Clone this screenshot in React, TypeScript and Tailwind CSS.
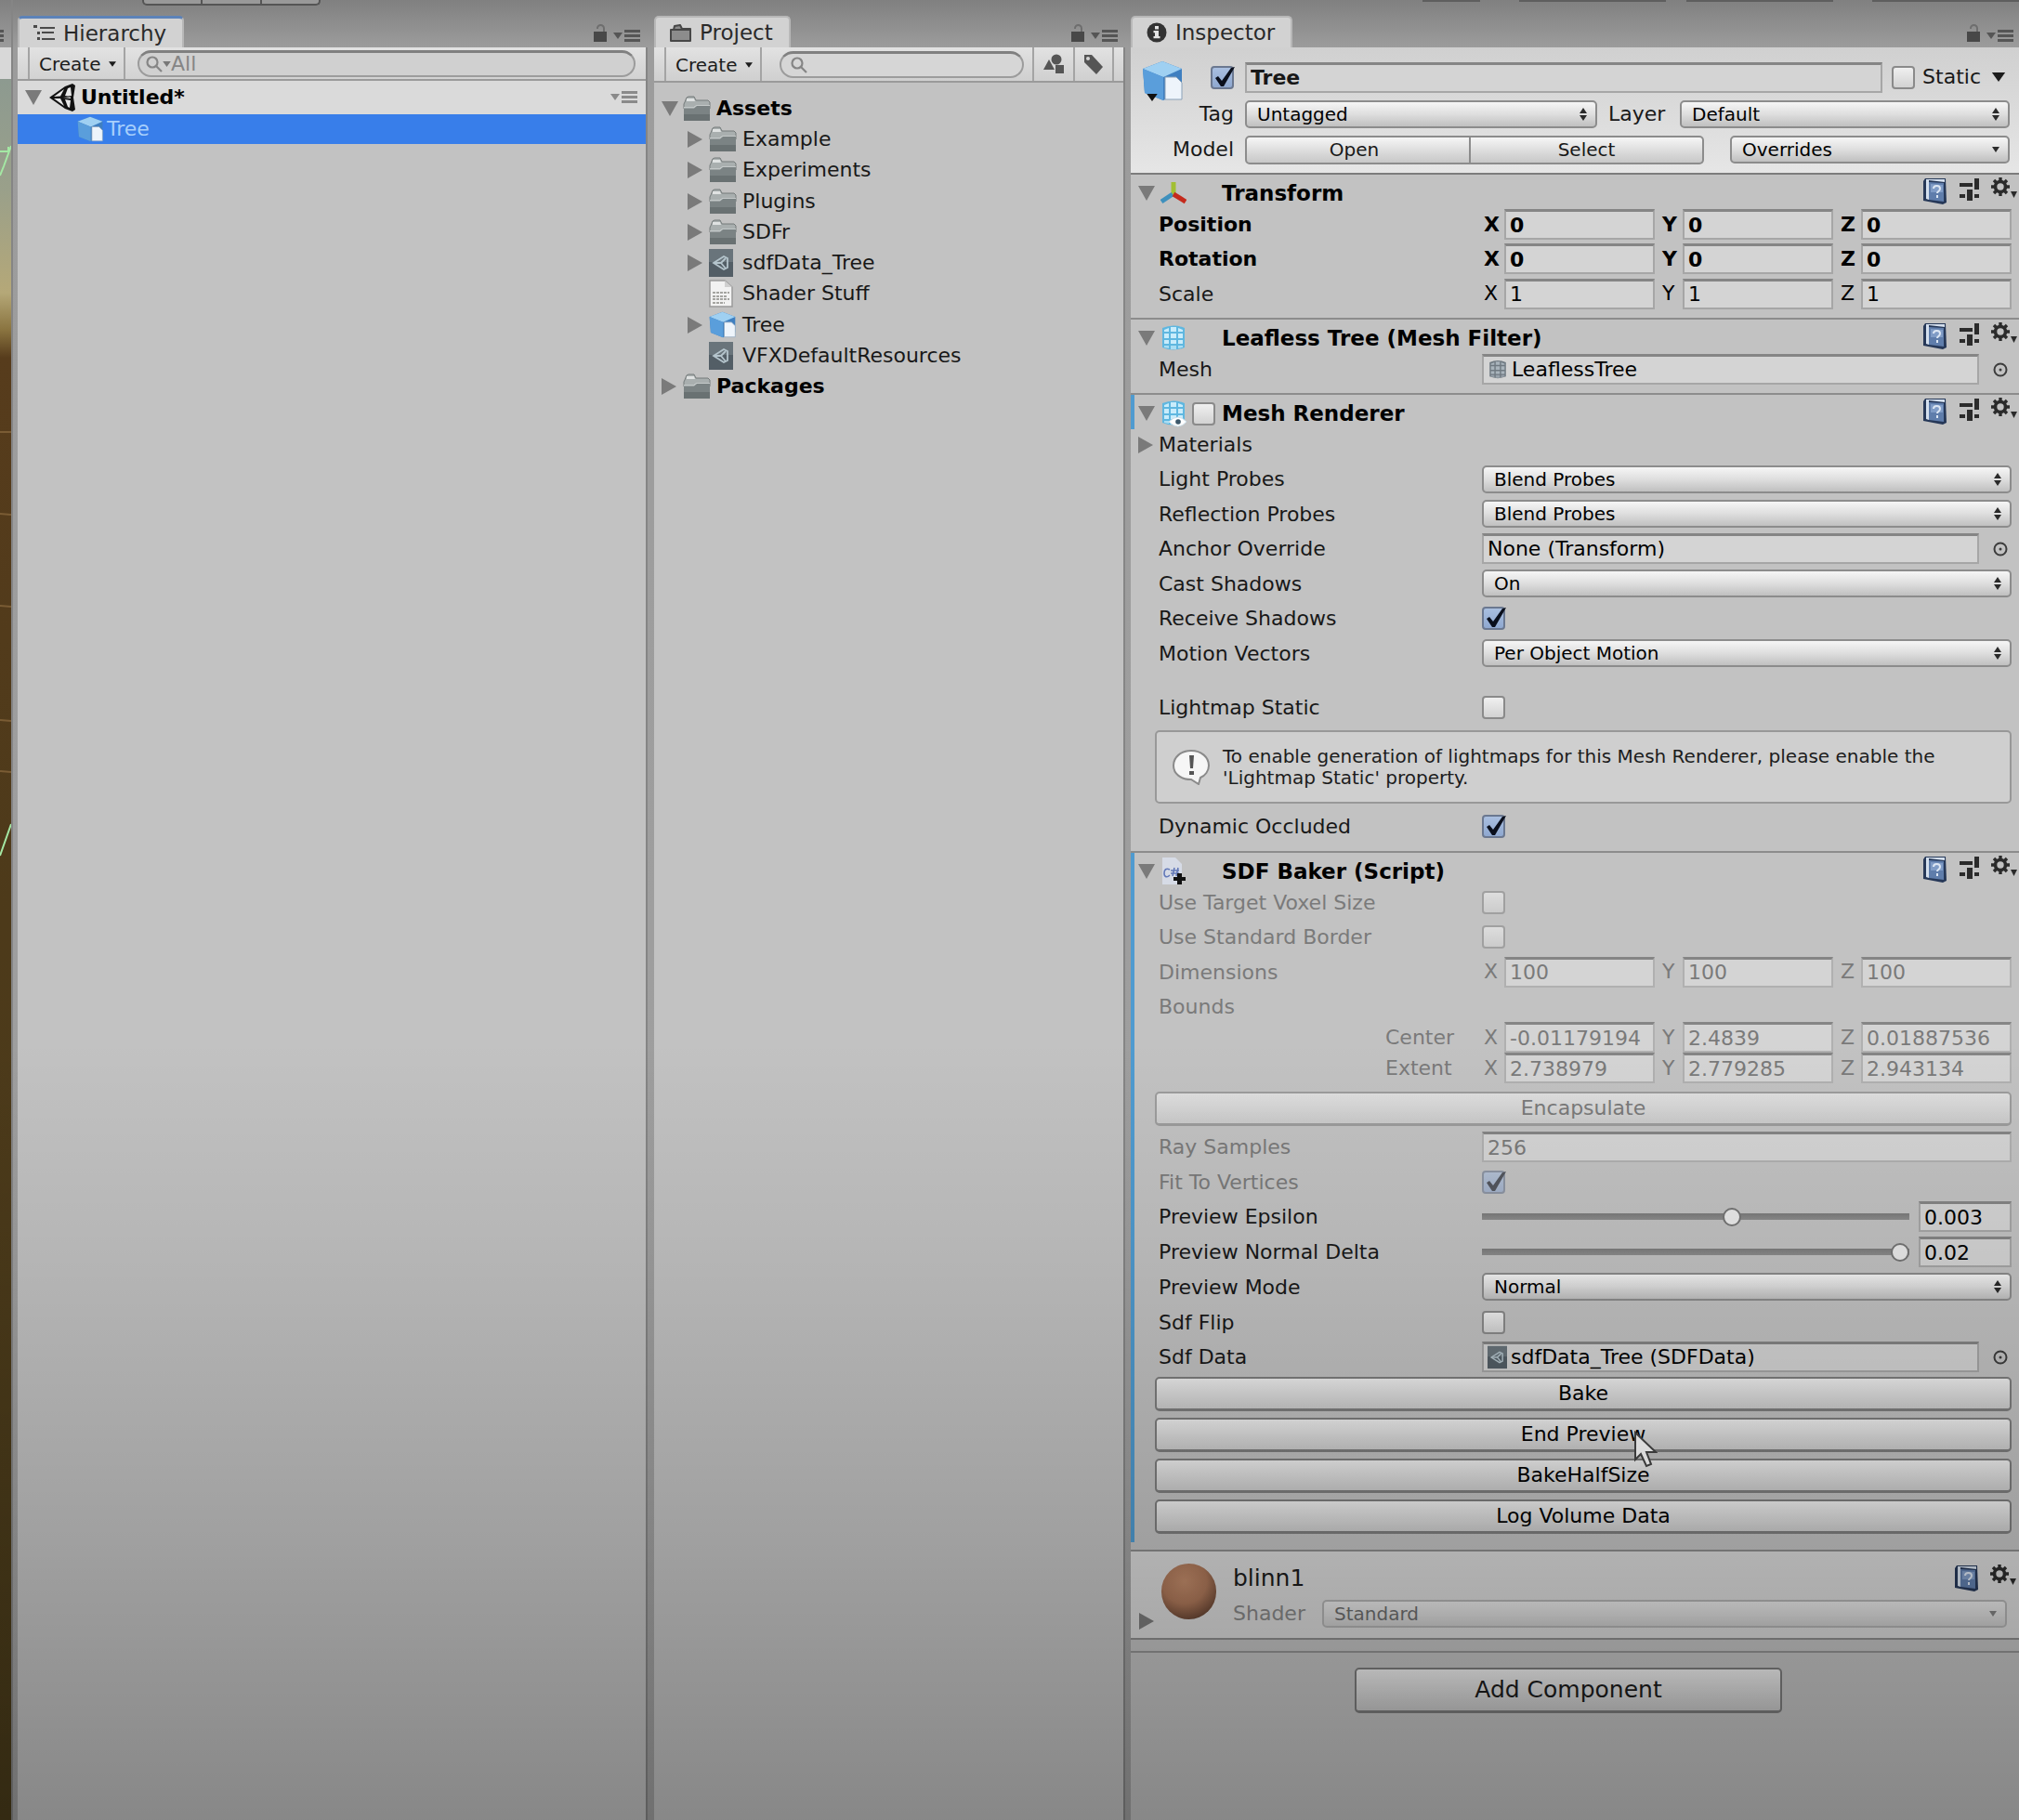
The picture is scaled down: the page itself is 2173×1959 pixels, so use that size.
import { useState } from "react";
import type { ReactNode } from "react";
import clsx from "clsx";

const selectLook =
    "w-full h-[30px] appearance-none rounded-[5px] border-2 border-[#8c8c8c] bg-linear-to-b from-[#f6f6f6] via-[#dedede] to-[#c0c0c0] pl-[11px] pr-8 text-[20px] leading-6 text-black outline-none";
const fieldLook =
    "h-[33px] min-w-0 rounded-none border-2 border-t-[3px] border-[#a6a6a6] border-t-[#858585] bg-[#d4d4d4] outline-none";

/* ---------- icons ---------- */

function Triangle({ open = false }: { open?: boolean }) {
    return (
        <svg className="h-[18px] w-[18px] shrink-0" viewBox="0 0 18 18" fill="#7a7a7a">
            {open ? <path d="M0 1h18L9 17z" /> : <path d="M0 0v18L16 9z" />}
        </svg>
    );
}

function Caret({ className }: { className?: string }) {
    return (
        <svg className={clsx("shrink-0", className)} viewBox="0 0 10 7" fill="currentColor">
            <path d="M0 0h10L5 7z" />
        </svg>
    );
}

function LockIcon() {
    return (
        <svg className="h-5 w-4" viewBox="0 0 16 20" fill="none">
            <path d="M5 5V4.500a3.500 3.500 0 0 1 7 0V10" stroke="#6e6e6e" strokeWidth="2" />
            <rect x="1" y="8" width="14" height="11" fill="#484848" />
        </svg>
    );
}

function MenuIcon() {
    return (
        <svg className="h-[14px] w-[29px]" viewBox="0 0 29 14" fill="currentColor">
            <path d="M0 3h10L5 10z" />
            <path d="M12 0h17v3H12zM12 5h17v3H12zM12 10h17v3H12z" />
        </svg>
    );
}

function HierarchyIcon() {
    return (
        <svg className="h-[18px] w-[23px]" viewBox="0 0 23 18" fill="#4a4a4a">
            <path d="M0 0h4v3H0zM7 2h16v2H7zM4 7h3v3H4zM9 7h13v2H9zM4 13h3v3H4zM9 14h14v2H9z" />
        </svg>
    );
}

function FolderTabIcon() {
    return (
        <svg className="h-[19px] w-[23px]" viewBox="0 0 23 19">
            <path d="M1 6h3l1-4 6-1 2 4h9v13H1z" fill="#8c8c8c" stroke="#474747" strokeWidth="2" strokeLinejoin="round" />
            <path d="M1 6h21" stroke="#474747" strokeWidth="2" />
        </svg>
    );
}

function InfoIcon() {
    return (
        <svg className="h-[22px] w-[22px]" viewBox="0 0 22 22">
            <circle cx="11" cy="11" r="10.500" fill="#333" />
            <path d="M9 4h4v3.500H9zM7.500 9H13v6h1.500v2.200h-7V15H9v-3.800H7.500z" fill="#e4e4e4" />
        </svg>
    );
}

function SearchIcon({ className }: { className?: string }) {
    return (
        <svg className={clsx("h-[18px] w-[18px] shrink-0", className)} viewBox="0 0 18 18" fill="none" stroke="#858585" strokeWidth="2.200">
            <circle cx="7" cy="7" r="5.500" />
            <path d="M11 11l6 6" />
        </svg>
    );
}

function UnityIcon({ className }: { className?: string }) {
    return (
        <svg className={className} viewBox="0 0 28 30">
            <path d="M0 15L17 3l8-3 3 2-2 13 2 13-3 2-8-3z" fill="#111" />
            <path d="M5 14l11-8-4 7.500zM5 16h7l4 8zM20 5l3-1 1 9-4 .5-3-.5zM15 15l8-.5v1.500zM17 17l6 1-1 8-2-1z" fill="#e8e8e8" />
        </svg>
    );
}

function CubeIcon({ className }: { className?: string }) {
    return (
        <svg className={className} viewBox="0 0 44 44">
            <path d="M1 9L22 1l21 8v25L23 43 3 35z" fill="#3f7fc0" />
            <path d="M1 9L22 1l21 8-20 9z" fill="#9fd0f2" />
            <path d="M1 9l22 9v25L3 35z" fill="#5a9edb" />
            <path d="M25 18h12l6 6v18H25z" fill="#eef4fb" stroke="#8ba2b8" strokeWidth="1" />
        </svg>
    );
}

function FolderIcon() {
    return (
        <svg className="h-7 w-[30px]" viewBox="0 0 30 28">
            <path d="M2 7l2-5 2-1h6l2 4h13l2 2v7H1V9z" fill="#a9afaf" stroke="#747a7a" strokeWidth="1" />
            <path d="M4 3h8l1 3H4z" fill="#dfe2e2" />
            <path d="M1 12h10l3-2h15v16H1z" fill="#7b8384" />
            <path d="M1 12h10l3-2h15v1H15l-3 2.500H1z" fill="#c3c8c8" />
            <path d="M1 20h28v7H1z" fill="#697172" />
        </svg>
    );
}

function AssetIcon({ className = "h-[30px] w-[26px]" }: { className?: string }) {
    return (
        <svg className={className} viewBox="0 0 26 30">
            <rect width="26" height="30" fill="#535e66" />
            <rect width="26" height="14" fill="#69747b" />
            <g fill="none" stroke="#b4c4cc" strokeWidth="1.800">
                <path d="M5 15l11-7 4 2v10l-4 2z" />
                <path d="M5 15h8l5-5M13 15l5 6" />
            </g>
        </svg>
    );
}

function TextAssetIcon() {
    return (
        <svg className="h-[30px] w-[26px]" viewBox="0 0 26 30">
            <path d="M1 1h16l8 7v21H1z" fill="#f2f2f2" stroke="#9a9a9a" strokeWidth="1.500" />
            <path d="M17 1v7h8" fill="#d0d0d0" />
            <path d="M4 14h18M4 18h15M4 21h18M4 25h13" stroke="#8a8a86" strokeWidth="1.500" strokeDasharray="3 1" />
        </svg>
    );
}

function TransformIcon() {
    return (
        <svg className="h-[26px] w-7" viewBox="0 0 28 26" fill="none" strokeWidth="5">
            <path d="M14 15V1" stroke="#a2bf33" />
            <path d="M13 14L1 22" stroke="#3e90bd" />
            <path d="M14 14l13 8" stroke="#c42a1c" />
        </svg>
    );
}

function MeshIcon({ eye = false, gray = false, className = "h-[30px] w-7" }: { eye?: boolean; gray?: boolean; className?: string }) {
    return (
        <svg className={className} viewBox="0 0 28 30">
            <path d="M2 4q12-5 24 0v21q-12 5-24 0z" fill={gray ? "#707a82" : "#5fb7e0"} />
            <g fill={gray ? "#a9b4bc" : "#c9ecfb"}>
                <path d="M4 6l5-2v4H4zM11 3h6v5h-6zM19 4l5 2v2h-5z" />
                <path d="M4 10h5v5H4zM11 10h6v5h-6zM19 10h5v5h-5z" />
                <path d="M4 17h5v4H4zM11 17h6v4h-6zM19 17h5v4h-5z" />
                <path d="M4 23h5v3l-5-1zM11 23h6v4h-6zM19 23h5v2l-5 1z" opacity=".7" />
            </g>
            {eye && (
                <>
                    <path d="M9 24q10-10 19 0-9 10-19 0z" fill="#fff" stroke="#c9dde8" strokeWidth="1" />
                    <circle cx="19" cy="24" r="2.800" fill="#3c586b" />
                </>
            )}
        </svg>
    );
}

function ScriptIcon() {
    return (
        <svg className="h-[30px] w-7" viewBox="0 0 28 30">
            <path d="M2 0h14l7 7v22H2z" fill="#d6dbe6" />
            <path d="M10 13c-4-2-6 0-6 4s3 5 6 2M13 20l2-9M17 20l2-9M11 14h9M11 17h9" fill="none" stroke="#6379b8" strokeWidth="1.600" />
            <path d="M18 17h5v4h4v4h-4v4h-5v-4h-4v-4h4z" fill="#111" />
        </svg>
    );
}

function HelpIcon() {
    return (
        <svg className="h-[30px] w-[27px]" viewBox="0 0 27 30">
            <path d="M3 1h22l1 26-4 2L1 25V4z" fill="#263858" />
            <path d="M4 2h20v3L7 3v21l-3-1z" fill="#d5e0ee" />
            <path d="M7 5l16 1v20L7 24z" fill="#5f7dab" />
            <path d="M9 7l13 1v8L9 16z" fill="#809cc6" />
            <path d="M12 12c0-4 7-4 7 0 0 3-3 3-3 5M16 19v3" fill="none" stroke="#dce6f3" strokeWidth="2" />
        </svg>
    );
}

function PresetIcon() {
    return (
        <svg className="h-[26px] w-[21px]" viewBox="0 0 21 26" fill="#2b2b2b">
            <path d="M0 6h14v4H0zM16 1h5v12h-5zM0 18h6v4H0zM8 13h6v12H8zM16 18h5v4h-5z" />
        </svg>
    );
}

function GearIcon() {
    return (
        <svg className="h-[26px] w-7" viewBox="0 0 28 26">
            <g stroke="#2b2b2b" fill="none">
                <circle cx="10" cy="10" r="5.500" strokeWidth="3.600" />
                <path d="M10 0v4M10 16v4M0 10h4M16 10h4M3 3l3 3M14 14l3 3M17 3l-3 3M6 14l-3 3" strokeWidth="3.400" />
            </g>
            <path d="M21 15h7l-3.500 7z" fill="#2b2b2b" />
        </svg>
    );
}

function PickerIcon() {
    return (
        <svg className="h-4 w-4" viewBox="0 0 16 16">
            <circle cx="8" cy="8" r="6.500" fill="none" stroke="#3c3c3c" strokeWidth="2" />
            <circle cx="8" cy="8" r="1.500" fill="#3c3c3c" />
        </svg>
    );
}

/* ---------- controls ---------- */

function Checkbox({ id, label, on = false, disabled = false }: { id?: string; label?: string; on?: boolean; disabled?: boolean }) {
    const [checked, setChecked] = useState(on);
    return (
        <span className={clsx("relative block h-[25px] w-[25px] shrink-0", disabled && "opacity-60")}>
            <input
                id={id}
                aria-label={label}
                type="checkbox"
                checked={checked}
                disabled={disabled}
                onChange={(e) => setChecked(e.target.checked)}
                className="block h-[25px] w-[25px] appearance-none rounded-[4px] border-2 border-[#8a8a8a] bg-linear-to-b from-[#f0f0f0] to-[#d2d2d2] checked:border-[#6b7890] checked:from-[#a9bfe0] checked:to-[#8fa8d0]"
            />
            {checked && (
                <svg className="pointer-events-none absolute inset-0 h-[25px] w-[27px]" viewBox="0 0 27 25">
                    <path d="M5 13l3-2 4 5L22 2l4-1-12 21h-3z" fill="#0a0f1c" />
                </svg>
            )}
        </span>
    );
}

function Select({ id, label, value, disabled, single }: { id?: string; label?: string; value: string; disabled?: boolean; single?: boolean }) {
    return (
        <span className={clsx("relative block min-w-0 flex-1", disabled && "opacity-50")}>
            <select id={id} aria-label={label} disabled={disabled} defaultValue={value} className={selectLook}>
                <option>{value}</option>
            </select>
            <svg className="pointer-events-none absolute right-[11px] top-2 h-[14px] w-2" viewBox="0 0 8 14" fill="#2a2a2a">
                {single ? <path d="M0 4h8L4 10z" /> : <path d="M4 0l4 6H0zM4 14l4-6H0z" />}
            </svg>
        </span>
    );
}

function Row({ id, label, bold, muted, children }: { id?: string; label: string; bold?: boolean; muted?: boolean; children?: ReactNode }) {
    return (
        <div className="flex items-start pl-[30px] pr-2">
            <label
                htmlFor={id}
                className={clsx(
                    "w-[348px] shrink-0 leading-[33px]",
                    bold && "font-bold text-black",
                    !bold && (muted ? "text-[#7a7a7a]" : "text-[#181818]")
                )}
            >
                {label}
            </label>
            <div className="flex h-[33px] min-w-0 flex-1 items-center">{children}</div>
        </div>
    );
}

function Vector({ name, values, bold, muted }: { name: string; values: string[]; bold?: boolean; muted?: boolean }) {
    return (
        <div className={clsx("flex min-w-0 flex-1 gap-[6px]", bold && "font-bold", muted && "text-[#7a7a7a]")}>
            {["X", "Y", "Z"].map((axis, i) => (
                <label key={axis} className="flex min-w-0 flex-1 items-center">
                    <span className="w-6 shrink-0 pl-[2px]">{axis}</span>
                    <input
                        aria-label={`${name} ${axis}`}
                        defaultValue={values[i]}
                        disabled={muted}
                        className={clsx(fieldLook, "w-full flex-1 px-1", muted && "border-[#b0b0b0] border-t-[#9a9a9a] bg-[#cbcbcb]")}
                    />
                </label>
            ))}
        </div>
    );
}

function ObjectField({ id, value, icon }: { id: string; value: string; icon?: ReactNode }) {
    return (
        <>
            <div className={clsx(fieldLook, "flex flex-1 items-center gap-1 pl-1")}>
                {icon}
                <input id={id} readOnly defaultValue={value} className="w-full min-w-0 bg-transparent outline-none" />
            </div>
            <button aria-label="Pick object" className="ml-[15px] mr-1">
                <PickerIcon />
            </button>
        </>
    );
}

function SliderRow({ id, label, position, value }: { id: string; label: string; position: number; value: string }) {
    return (
        <Row id={id} label={label}>
            <input
                id={id}
                type="range"
                min={0}
                max={1}
                step="any"
                defaultValue={position}
                className="h-5 min-w-0 flex-1 appearance-none bg-[linear-gradient(#7c7c7c,#8c8c8c)] bg-size-[100%_7px] bg-center bg-no-repeat [&::-webkit-slider-thumb]:h-5 [&::-webkit-slider-thumb]:w-5 [&::-webkit-slider-thumb]:appearance-none [&::-webkit-slider-thumb]:rounded-full [&::-webkit-slider-thumb]:border-2 [&::-webkit-slider-thumb]:border-[#757575] [&::-webkit-slider-thumb]:bg-[#eaeaea]"
            />
            <input aria-label={`${label} value`} defaultValue={value} className={clsx(fieldLook, "ml-[10px] w-[100px] px-1")} />
        </Row>
    );
}

function WideButton({ children, disabled }: { children: ReactNode; disabled?: boolean }) {
    return (
        <button
            disabled={disabled}
            className="ml-[26px] mr-2 h-[37px] rounded-[5px] border-2 border-b-[3px] border-[#7e7e7e] bg-linear-to-b from-[#f0f0f0] to-[#cdcdcd] leading-8 disabled:border-[#9c9c9c] disabled:from-[#dfdfdf] disabled:to-[#cacaca] disabled:text-[#7a7a7a]"
        >
            {children}
        </button>
    );
}

function ComponentHeader({ title, icon, toggle }: { title: string; icon: ReactNode; toggle?: boolean }) {
    return (
        <div className="flex h-[37px] items-center pt-[3px] pl-2">
            <Triangle open />
            <div className="ml-[6px] flex w-[34px] items-center">{icon}</div>
            <div className="w-[32px]">{toggle && <Checkbox label={`Enable ${title}`} />}</div>
            <h2 className="flex-1 text-[23px] font-bold leading-8">{title}</h2>
            <div className="flex h-[34px] items-start gap-[13px] pr-[2px]">
                <HelpIcon />
                <PresetIcon />
                <GearIcon />
            </div>
        </div>
    );
}

/* ---------- panels ---------- */

function Tab({ icon, title, active }: { icon: ReactNode; title: string; active?: boolean }) {
    return (
        <div className="flex h-[51px] items-end justify-between pr-[6px]">
            <div
                className={clsx(
                    "flex h-[34px] items-center gap-[9px] rounded-t-[5px] border-x-2 border-t-2 border-[#b8b8b8] bg-[#d2d2d2] pl-[15px] pr-[17px] text-[23px] text-[#2a2a2a]",
                    active && "border-t-[3px] border-t-[#5c82b8]"
                )}
            >
                {icon}
                <span>{title}</span>
            </div>
            <div className="flex items-end gap-[6px] pb-[5px] text-[#555]">
                <LockIcon />
                <MenuIcon />
            </div>
        </div>
    );
}

function CreateButton() {
    return (
        <button className="ml-[11px] flex h-full w-[105px] items-center justify-between border-x-2 border-[#a4a4a4] pt-[2px] pl-[10px] pr-2 text-[20px] text-[#1c1c1c]">
            Create
            <Caret className="h-[6px] w-2" />
        </button>
    );
}

function HierarchyPanel() {
    return (
        <section className="flex w-[676px] shrink-0 flex-col">
            <Tab icon={<HierarchyIcon />} title="Hierarchy" active />
            <div className="flex h-9 items-center border-b-2 border-[#9a9a9a] bg-linear-to-b from-[#e2e2e2] to-[#d2d2d2] pr-[11px]">
                <CreateButton />
                <label className="ml-[13px] flex h-[29px] flex-1 items-center rounded-full border-2 border-t-[3px] border-[#9c9c9c] border-t-[#808080] bg-[#d0d0d0] pl-[7px]">
                    <SearchIcon />
                    <Caret className="h-[6px] w-[9px] text-[#777]" />
                    <input aria-label="Search hierarchy" placeholder="All" className="w-full bg-transparent outline-none placeholder:text-[#858585]" />
                </label>
            </div>
            <div className="flex-1 bg-[#c2c2c2]">
                <div className="flex h-9 items-center bg-[#dadada] pl-2 pr-[9px] text-[#8a8a8a]">
                    <Triangle open />
                    <UnityIcon className="ml-2 h-[30px] w-7" />
                    <span className="ml-[6px] flex-1 font-bold text-black">Untitled*</span>
                    <MenuIcon />
                </div>
                <div className="flex h-8 items-center bg-[#387eea] pl-16 text-[#a8d0fc]">
                    <CubeIcon className="h-7 w-7" />
                    <span className="ml-1">Tree</span>
                </div>
            </div>
        </section>
    );
}

const assets = [
    { name: "Example", icon: <FolderIcon />, fold: true },
    { name: "Experiments", icon: <FolderIcon />, fold: true },
    { name: "Plugins", icon: <FolderIcon />, fold: true },
    { name: "SDFr", icon: <FolderIcon />, fold: true },
    { name: "sdfData_Tree", icon: <AssetIcon />, fold: true },
    { name: "Shader Stuff", icon: <TextAssetIcon />, fold: false },
    { name: "Tree", icon: <CubeIcon className="h-[29px] w-[29px]" />, fold: true },
    { name: "VFXDefaultResources", icon: <AssetIcon />, fold: false },
];

function ProjectPanel() {
    return (
        <section className="flex w-[505px] shrink-0 flex-col">
            <Tab icon={<FolderTabIcon />} title="Project" />
            <div className="flex h-[38px] items-center border-b-2 border-[#9a9a9a] bg-linear-to-b from-[#e2e2e2] to-[#cfcfcf] pr-[10px]">
                <CreateButton />
                <label className="ml-[19px] mr-[9px] flex h-[29px] min-w-0 flex-1 items-center rounded-full border-2 border-t-[3px] border-[#9c9c9c] border-t-[#808080] bg-[#d6d6d6] pl-[10px]">
                    <SearchIcon />
                    <input aria-label="Search project" className="w-full min-w-0 bg-transparent outline-none" />
                </label>
                <button aria-label="Search by type" className="flex h-full w-[44px] items-center justify-center border-l-2 border-[#a4a4a4]">
                    <svg className="h-[22px] w-[22px]" viewBox="0 0 22 22" fill="#555">
                        <circle cx="14" cy="6" r="5.500" />
                        <path d="M0 17L6 6l6 11zM13 12h9v9h-9z" />
                    </svg>
                </button>
                <button aria-label="Search by label" className="flex h-full w-[44px] items-center justify-center border-x-2 border-[#a4a4a4]">
                    <svg className="h-[22px] w-[22px]" viewBox="0 0 22 22">
                        <path d="M1 1h8l12 13-7 8L1 9z" fill="#555" />
                        <circle cx="5" cy="5" r="2" fill="#d6d6d6" />
                    </svg>
                </button>
            </div>
            <div className="flex-1 bg-[#c2c2c2] pt-[11px]">
                <ul className="grid h-[333px] auto-rows-fr text-[#181818]">
                    <li className="flex items-center pl-2">
                        <Triangle open />
                        <span className="ml-[5px] flex w-9 items-center">
                            <FolderIcon />
                        </span>
                        <span className="font-bold text-black">Assets</span>
                    </li>
                    {assets.map((item) => (
                        <li key={item.name} className="flex items-center pl-9">
                            <span className="w-[18px]">{item.fold && <Triangle />}</span>
                            <span className="ml-[5px] flex w-9 items-center justify-start">{item.icon}</span>
                            <span>{item.name}</span>
                        </li>
                    ))}
                    <li className="flex items-center pl-2">
                        <Triangle />
                        <span className="ml-[5px] flex w-9 items-center">
                            <FolderIcon />
                        </span>
                        <span className="font-bold text-black">Packages</span>
                    </li>
                </ul>
            </div>
        </section>
    );
}

function ObjectHeader() {
    return (
        <div className="flex h-[135px] bg-linear-to-b from-[#d0d0d0] to-[#e6e6e6] pt-[14px] pr-[10px]">
            <div className="relative ml-3 w-[44px] shrink-0">
                <CubeIcon className="h-[44px] w-[44px]" />
                <Caret className="absolute left-[3px] top-9 h-2 w-4 text-[#111]" />
            </div>
            <div className="flex min-w-0 flex-1 flex-col gap-[6px] text-[#181818]">
                <div className="flex h-9 items-center">
                    <div className="ml-[30px] mr-3">
                        <Checkbox label="Active" on />
                    </div>
                    <input aria-label="Name" defaultValue="Tree" className={clsx(fieldLook, "flex-1 px-1 font-bold")} />
                    <div className="ml-[10px] mr-[8px]">
                        <Checkbox id="static" />
                    </div>
                    <label htmlFor="static">Static</label>
                    <Caret className="ml-[10px] mr-[3px] h-[10px] w-[18px] text-[#1c1c1c]" />
                </div>
                <div className="flex h-8 items-center">
                    <label htmlFor="tag" className="w-[67px] shrink-0 pr-3 text-right">
                        Tag
                    </label>
                    <div className="flex w-[379px] shrink-0">
                        <Select id="tag" value="Untagged" />
                    </div>
                    <label htmlFor="layer" className="w-[89px] shrink-0 pl-3">
                        Layer
                    </label>
                    <Select id="layer" value="Default" />
                </div>
                <div className="flex h-8 items-center">
                    <span className="-ml-[14px] w-[81px] shrink-0 pr-3 text-right">Model</span>
                    <button className="h-[31px] w-[243px] shrink-0 rounded-l-[5px] border-2 border-[#8c8c8c] bg-linear-to-b from-[#f6f6f6] via-[#dedede] to-[#c8c8c8] pr-2 text-[20px] leading-6">
                        Open
                    </button>
                    <button className="h-[31px] w-[251px] shrink-0 rounded-r-[5px] border-2 border-l-0 border-[#8c8c8c] bg-linear-to-b from-[#f6f6f6] via-[#dedede] to-[#c8c8c8] text-[20px] leading-6">
                        Select
                    </button>
                    <div className="ml-7 flex min-w-0 flex-1">
                        <Select label="Overrides" value="Overrides" single />
                    </div>
                </div>
            </div>
        </div>
    );
}

function Inspector() {
    return (
        <section className="flex min-w-0 flex-1 flex-col">
            <Tab icon={<InfoIcon />} title="Inspector" />
            <div className="flex-1 bg-[#c2c2c2]">
                <ObjectHeader />

                <div className="border-t-2 border-[#7c7c7c] pb-[5px]">
                    <ComponentHeader title="Transform" icon={<TransformIcon />} />
                    <div className="grid h-[112px] auto-rows-fr">
                        <Row label="Position" bold>
                            <Vector name="Position" values={["0", "0", "0"]} bold />
                        </Row>
                        <Row label="Rotation" bold>
                            <Vector name="Rotation" values={["0", "0", "0"]} bold />
                        </Row>
                        <Row label="Scale">
                            <Vector name="Scale" values={["1", "1", "1"]} />
                        </Row>
                    </div>
                </div>

                <div className="border-t-2 border-[#8c8c8c] pb-[5px]">
                    <ComponentHeader title="Leafless Tree (Mesh Filter)" icon={<MeshIcon />} />
                    <div className="h-[37px]">
                        <Row id="mesh" label="Mesh">
                            <ObjectField id="mesh" value="LeaflessTree" icon={<MeshIcon gray className="h-[22px] w-[22px] shrink-0" />} />
                        </Row>
                    </div>
                </div>

                <div className="border-t-2 border-[#8c8c8c] pb-[5px]">
                    <div className="border-l-4 border-[#4f9bd0] [&>div]:-ml-1">
                        <ComponentHeader title="Mesh Renderer" icon={<MeshIcon eye />} toggle />
                    </div>
                    <div className="flex h-[37px] items-start gap-1 pl-2 leading-[33px] text-[#181818]">
                        <span className="flex h-[33px] items-center">
                            <Triangle />
                        </span>
                        <span>Materials</span>
                    </div>
                    <div className="grid h-[225px] auto-rows-fr">
                        <Row id="light-probes" label="Light Probes">
                            <Select id="light-probes" value="Blend Probes" />
                        </Row>
                        <Row id="reflection-probes" label="Reflection Probes">
                            <Select id="reflection-probes" value="Blend Probes" />
                        </Row>
                        <Row id="anchor" label="Anchor Override">
                            <ObjectField id="anchor" value="None (Transform)" />
                        </Row>
                        <Row id="cast" label="Cast Shadows">
                            <Select id="cast" value="On" />
                        </Row>
                        <Row id="receive" label="Receive Shadows">
                            <Checkbox id="receive" on />
                        </Row>
                        <Row id="motion" label="Motion Vectors">
                            <Select id="motion" value="Per Object Motion" />
                        </Row>
                    </div>
                    <div className="pt-[21px]">
                        <Row id="lightmap" label="Lightmap Static">
                            <Checkbox id="lightmap" />
                        </Row>
                    </div>
                    <div className="mt-2 mb-2 ml-[26px] mr-2 flex h-[79px] items-center gap-[14px] rounded-[5px] border-2 border-[#989898] bg-[#cfcfcf] pl-[17px]">
                        <svg className="h-[38px] w-10 shrink-0" viewBox="0 0 40 38">
                            <path d="M20 1c11 0 19 7 19 16 0 6-4 11-9 13l-2 7-8-5C9 32 1 26 1 17S9 1 20 1z" fill="#f6f6f6" stroke="#8a8a8a" strokeWidth="2" />
                            <path d="M18 6h5l-1 14h-3zM18 23h5v4h-5z" fill="#555" />
                        </svg>
                        <p className="text-[20px] leading-[23px] text-[#1c1c1c]">
                            To enable generation of lightmaps for this Mesh Renderer, please enable the
                            <br />
                            'Lightmap Static' property.
                        </p>
                    </div>
                    <div className="h-[38px]">
                        <Row id="occluded" label="Dynamic Occluded">
                            <Checkbox id="occluded" on />
                        </Row>
                    </div>
                </div>

                <div className="border-t-2 border-[#8c8c8c] pb-2">
                    <div className="border-l-4 border-[#4f9bd0] pb-[9px] [&>div]:-ml-1">
                        <ComponentHeader title="SDF Baker (Script)" icon={<ScriptIcon />} />
                        <div className="grid h-[112px] auto-rows-fr">
                            <Row id="voxel" label="Use Target Voxel Size" muted>
                                <Checkbox id="voxel" disabled />
                            </Row>
                            <Row id="border" label="Use Standard Border" muted>
                                <Checkbox id="border" disabled />
                            </Row>
                            <Row label="Dimensions" muted>
                                <Vector name="Dimensions" values={["100", "100", "100"]} muted />
                            </Row>
                        </div>
                        <Row label="Bounds" muted />
                        <div className="flex pl-[274px] pr-2 leading-[33px] text-[#7a7a7a]">
                            <span className="w-[104px] shrink-0">Center</span>
                            <Vector name="Center" values={["-0.01179194", "2.4839", "0.01887536"]} muted />
                        </div>
                        <div className="flex pl-[274px] pr-2 leading-[33px] text-[#7a7a7a]">
                            <span className="w-[104px] shrink-0">Extent</span>
                            <Vector name="Extent" values={["2.738979", "2.779285", "2.943134"]} muted />
                        </div>
                        <div className="flex flex-col pt-[9px] pb-[6px]">
                            <WideButton disabled>Encapsulate</WideButton>
                        </div>
                        <div className="grid h-[264px] auto-rows-fr">
                            <Row id="rays" label="Ray Samples" muted>
                                <input
                                    id="rays"
                                    disabled
                                    defaultValue="256"
                                    className={clsx(fieldLook, "flex-1 border-[#b0b0b0] border-t-[#9a9a9a] bg-[#cbcbcb] px-1 text-[#7a7a7a]")}
                                />
                            </Row>
                            <Row id="fit" label="Fit To Vertices" muted>
                                <Checkbox id="fit" on disabled />
                            </Row>
                            <SliderRow id="epsilon" label="Preview Epsilon" position={0.588} value="0.003" />
                            <SliderRow id="delta" label="Preview Normal Delta" position={1} value="0.02" />
                            <Row id="mode" label="Preview Mode">
                                <Select id="mode" value="Normal" />
                            </Row>
                            <Row id="flip" label="Sdf Flip">
                                <Checkbox id="flip" />
                            </Row>
                            <Row id="data" label="Sdf Data">
                                <ObjectField id="data" value="sdfData_Tree (SDFData)" icon={<AssetIcon className="h-[26px] w-[21px] shrink-0" />} />
                            </Row>
                        </div>
                        <div className="relative flex flex-col gap-[7px]">
                            <WideButton>Bake</WideButton>
                            <WideButton>End Preview</WideButton>
                            <WideButton>BakeHalfSize</WideButton>
                            <WideButton>Log Volume Data</WideButton>
                            <svg className="pointer-events-none absolute left-[57%] top-[58px] ml-[-4px] h-[40px] w-[26px]" viewBox="0 0 26 40">
                                <path d="M2 2v29l6-6 6 13 5-2-5-13h10z" fill="#fff" stroke="#444" strokeWidth="2" />
                            </svg>
                        </div>
                    </div>
                </div>

                <div className="relative flex h-[97px] border-y-2 border-[#8c8c8c] bg-[#d8d8d8] pt-[13px] pl-[33px] pr-[13px]">
                    <div className="h-[60px] w-[59px] shrink-0 rounded-full bg-[radial-gradient(circle_at_42%_32%,#c08a69_0%,#ab7658_45%,#704b38_75%,#1c120e_100%)]" />
                    <div className="absolute bottom-[9px] left-[9px]">
                        <Triangle />
                    </div>
                    <div className="ml-[18px] min-w-0 flex-1">
                        <div className="flex h-8 items-center justify-between">
                            <h2 className="text-[25px] text-[#1c1c1c]">blinn1</h2>
                            <div className="-mr-[10px] flex items-start gap-3">
                                <HelpIcon />
                                <GearIcon />
                            </div>
                        </div>
                        <div className="mt-[7px] flex items-center text-[#858585]">
                            <label htmlFor="shader" className="w-[96px] shrink-0">
                                Shader
                            </label>
                            <Select id="shader" value="Standard" disabled single />
                        </div>
                    </div>
                </div>
                <div className="h-[12px]" />
                <div className="flex justify-center border-t-2 border-[#939393] pt-4 pr-[14px]">
                    <button className="h-[49px] w-[460px] rounded-[5px] border-2 border-b-[3px] border-[#7c7c7c] bg-linear-to-b from-[#f0f0f0] to-[#c8c8c8] text-[25px] text-[#1c1c1c]">
                        Add Component
                    </button>
                </div>
            </div>
        </section>
    );
}

// Sliver of the scene view that sits left of the hierarchy
function SceneEdge() {
    return (
        <div className="flex w-[12px] shrink-0 flex-col overflow-hidden">
            <div className="flex h-[51px] flex-col items-start gap-[2px] pt-8">
                <div className="h-[3px] w-1 bg-[#555]" />
                <div className="h-[3px] w-1 bg-[#555]" />
                <div className="h-[3px] w-1 bg-[#555]" />
            </div>
            <div className="h-[34px] bg-[#d8d8d8]" />
            <div className="relative flex-1 bg-[linear-gradient(#8d9a90_0px,#9aa08a_120px,#b5a878_230px,#8a7440_270px,#573c1c_300px,#4d3a1a_900px,#4a3c1a_1874px)]">
                <svg className="absolute left-0 top-0 h-[900px] w-3" viewBox="0 0 12 900" fill="none">
                    <path d="M0 78h9v-5M0 104l4-10 8-22M0 836l12-34" stroke="#a4e8a4" strokeWidth="2" />
                    <path d="M0 380h12M0 468l12 1M0 567l12 1M0 690l12 1M0 745l12 1" stroke="#7a5c34" strokeWidth="2" />
                </svg>
            </div>
        </div>
    );
}

export default function App() {
    return (
        <main className="relative flex min-h-screen overflow-hidden bg-[linear-gradient(#808080_0px,#9c9c9c_51px,#a0a0a0_100%)] font-['DejaVu_Sans',sans-serif] text-[22px] leading-7 text-black">
            {/* bottom edge of the editor toolbar */}
            <div className="absolute left-[153px] top-0 flex h-[6px] w-[192px] divide-x-2 divide-[#555] rounded-b-[5px] border-2 border-t-0 border-[#555] bg-[#999]">
                <div className="flex-1" />
                <div className="flex-1" />
                <div className="flex-1" />
            </div>
            <div className="absolute right-5 top-0 flex h-[2px] gap-[42px]">
                <div className="w-[62px] bg-[#5e5e5e]" />
                <div className="mr-[-20px] w-[158px] bg-[#5e5e5e]" />
                <div className="w-[158px] bg-[#5e5e5e]" />
                <div className="mr-[-20px] w-[158px] bg-[#5e5e5e]" />
            </div>

            <SceneEdge />
            <div className="w-[7px] shrink-0 border-l-2 border-[#858585]" />
            <HierarchyPanel />
            <div className="mt-[51px] w-[9px] shrink-0 border-l-2 border-[#858585]" />
            <ProjectPanel />
            <div className="mt-[51px] w-[8px] shrink-0 border-l-2 border-[#858585]" />
            <Inspector />

            {/* shade that deepens towards the bottom of the window */}
            <div className="pointer-events-none absolute inset-0 bg-[linear-gradient(transparent_1120px,rgba(0,0,0,0.06)_1330px,rgba(0,0,0,0.175)_1660px,rgba(0,0,0,0.3)_1959px)]" />
        </main>
    );
}
